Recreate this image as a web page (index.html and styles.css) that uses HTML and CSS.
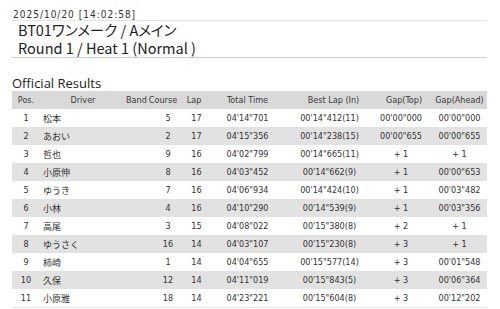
FILE: index.html
```html
<!DOCTYPE html>
<html lang="ja">
<head>
<meta charset="utf-8">
<title>Official Results</title>
<link rel="stylesheet" href="styles.css">
</head>
<body>
<div class="page">
  <div class="stamp">2025/10/20 [14:02:58]</div>
  <div class="title">
    <div class="title-line">BT01ワンメーク / Aメイン</div>
    <div class="title-line">Round 1 / Heat 1 (Normal )</div>
  </div>
  <h2 class="section">Official Results</h2>
  <table class="results">
    <colgroup>
      <col class="c-pos"><col class="c-driver"><col class="c-band"><col class="c-course"><col class="c-lap"><col class="c-total"><col class="c-best"><col class="c-top"><col class="c-ahead">
    </colgroup>
    <thead>
      <tr>
        <th>Pos.</th><th>Driver</th><th>Band</th><th>Course</th><th>Lap</th><th>Total Time</th><th class="h-best">Best Lap (In)</th><th class="h-top">Gap(Top)</th><th>Gap(Ahead)</th>
      </tr>
    </thead>
    <tbody>
      <tr><td>1</td><td class="name">松本</td><td></td><td class="num">5</td><td class="lap">17</td><td>04'14"701</td><td>00'14"412(11)</td><td>00'00"000</td><td>00'00"000</td></tr>
      <tr><td>2</td><td class="name">あおい</td><td></td><td class="num">2</td><td class="lap">17</td><td>04'15"356</td><td>00'14"238(15)</td><td>00'00"655</td><td>00'00"655</td></tr>
      <tr><td>3</td><td class="name">哲也</td><td></td><td class="num">9</td><td class="lap">16</td><td>04'02"799</td><td>00'14"665(11)</td><td>+ 1</td><td>+ 1</td></tr>
      <tr><td>4</td><td class="name">小原伸</td><td></td><td class="num">8</td><td class="lap">16</td><td>04'03"452</td><td>00'14"662(9)</td><td>+ 1</td><td>00'00"653</td></tr>
      <tr><td>5</td><td class="name">ゆうき</td><td></td><td class="num">7</td><td class="lap">16</td><td>04'06"934</td><td>00'14"424(10)</td><td>+ 1</td><td>00'03"482</td></tr>
      <tr><td>6</td><td class="name">小林</td><td></td><td class="num">4</td><td class="lap">16</td><td>04'10"290</td><td>00'14"539(9)</td><td>+ 1</td><td>00'03"356</td></tr>
      <tr><td>7</td><td class="name">高尾</td><td></td><td class="num">3</td><td class="lap">15</td><td>04'08"022</td><td>00'15"380(8)</td><td>+ 2</td><td>+ 1</td></tr>
      <tr><td>8</td><td class="name">ゆうさく</td><td></td><td class="num">16</td><td class="lap">14</td><td>04'03"107</td><td>00'15"230(8)</td><td>+ 3</td><td>+ 1</td></tr>
      <tr><td>9</td><td class="name">柿崎</td><td></td><td class="num">1</td><td class="lap">14</td><td>04'04"655</td><td>00'15"577(14)</td><td>+ 3</td><td>00'01"548</td></tr>
      <tr><td>10</td><td class="name">久保</td><td></td><td class="num">12</td><td class="lap">14</td><td>04'11"019</td><td>00'15"843(5)</td><td>+ 3</td><td>00'06"364</td></tr>
      <tr><td>11</td><td class="name">小原雅</td><td></td><td class="num">18</td><td class="lap">14</td><td>04'23"221</td><td>00'15"604(8)</td><td>+ 3</td><td>00'12"202</td></tr>
    </tbody>
  </table>
</div>
</body>
</html>
```

FILE: styles.css
```css
html, body {
  margin: 0;
  padding: 0;
  background: #ffffff;
}

.page {
  width: 475px;
  padding: 9px 0 0 12px;
  color: #333333;
  font-family: "DejaVu Sans Condensed", "DejaVu Sans", "Noto Sans CJK JP", sans-serif;
  font-stretch: condensed;
}

.stamp {
  font-size: 10px;
  letter-spacing: 1px;
  line-height: 11px;
  padding-left: 1px;
  border-bottom: 1px solid #e4e4e4;
  color: #333333;
}

.title {
  border-bottom: 1px solid #cfcfcf;
  padding-left: 6px;
  font-family: "Noto Sans CJK JP", sans-serif;
  font-feature-settings: "palt";
  font-stretch: normal;
  font-size: 14.5px;
  line-height: 18px;
  color: #222222;
}

.title-line {
  height: 18px;
  overflow: visible;
}

.section {
  margin: 18px 0 0 0;
  font-family: "Open Sans", "Noto Sans CJK JP", sans-serif;
  font-stretch: normal;
  font-weight: normal;
  font-size: 13px;
  line-height: 15px;
  color: #222222;
}

.results {
  width: 475px;
  border-collapse: collapse;
  table-layout: fixed;
  margin-top: 0;
  font-size: 9px;
  border-bottom: 1px solid #e6e6e6;
}

.c-pos { width: 28px; }
.c-driver { width: 86px; }
.c-band { width: 18px; }
.c-course { width: 38px; }
.c-lap { width: 24px; }
.c-total { width: 83px; }
.c-best { width: 81px; }
.c-top { width: 62px; }
.c-ahead { width: 55px; }

.results th,
.results td {
  height: 18px;
  padding: 0;
  text-align: center;
  white-space: nowrap;
  overflow: visible;
  font-weight: normal;
}

.results thead tr {
  background: #d9d9d9;
}

.results th {
  color: #3a3a3a;
}

.results th.h-best {
  padding-left: 8px;
}

.results th.h-top {
  padding-left: 6px;
}

.results tbody tr:nth-child(even) {
  background: #e2e2e2;
}

.results td.name {
  text-align: left;
  padding-left: 3px;
  font-family: "Noto Sans CJK JP", sans-serif;
  font-stretch: normal;
}

.results td.num {
  padding-left: 10px;
}

.results td.lap {
  padding-left: 5px;
}
```
